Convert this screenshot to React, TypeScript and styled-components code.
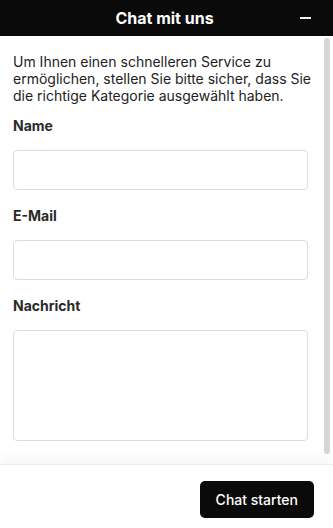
import React, { FC } from "react";
import styled, { createGlobalStyle } from "styled-components";

const GlobalStyle = createGlobalStyle`
  body {
    margin: 0;
    background: #ffffff;
    font-family: Inter, "Noto Sans", "Liberation Sans", sans-serif;
  }
  * {
    box-sizing: border-box;
  }
`;

const fields = [
  { label: "Name", name: "name", multiline: false },
  { label: "E-Mail", name: "email", multiline: false },
  { label: "Nachricht", name: "message", multiline: true },
];

const App: FC = () => {
  return (
    <StyledWidget>
      <GlobalStyle />
      <StyledHeader>
        <span />
        <StyledTitle>Chat mit uns</StyledTitle>
        <StyledMinimize aria-label="Minimieren">
          <StyledBar />
        </StyledMinimize>
      </StyledHeader>

      <StyledScrollArea>
        <StyledBody>
          <StyledIntro>
            Um Ihnen einen schnelleren Service zu ermöglichen, stellen Sie
            bitte sicher, dass Sie die richtige Kategorie ausgewählt haben.
          </StyledIntro>

          {fields.map((field) => (
            <StyledField key={field.name}>
              <StyledLabel htmlFor={field.name}>{field.label}</StyledLabel>
              {field.multiline ? (
                <StyledTextArea id={field.name} name={field.name} />
              ) : (
                <StyledInput id={field.name} name={field.name} type="text" />
              )}
            </StyledField>
          ))}
        </StyledBody>
        <StyledScrollbar>
          <StyledThumb />
        </StyledScrollbar>
      </StyledScrollArea>

      <StyledFooter>
        <StyledButton type="button">Chat starten</StyledButton>
      </StyledFooter>
    </StyledWidget>
  );
};

const StyledWidget = styled.div`
  width: 333px;
  height: 528px;
  display: flex;
  flex-direction: column;
  background: #ffffff;
  overflow: hidden;
`;

const StyledHeader = styled.header`
  height: 36px;
  flex-shrink: 0;
  display: grid;
  grid-template-columns: 1fr auto 1fr;
  align-items: center;
  background: #0a0a0a;
  color: #ffffff;
`;

const StyledTitle = styled.h1`
  margin: 0 4px 0 0;
  font-size: 16px;
  font-weight: 700;
  line-height: 20px;
`;

const StyledMinimize = styled.button`
  justify-self: end;
  width: 28px;
  height: 28px;
  margin-right: 14px;
  padding: 0;
  border: none;
  background: transparent;
  display: flex;
  align-items: center;
  justify-content: center;
  cursor: pointer;
`;

const StyledBar = styled.span`
  width: 11px;
  height: 2px;
  background: #f2f2f2;
`;

const StyledScrollArea = styled.div`
  flex: 1;
  min-height: 0;
  display: flex;
`;

const StyledBody = styled.div`
  flex: 1;
  overflow: hidden;
  padding: 17px 16px 0 13px;
  display: flex;
  flex-direction: column;
  gap: 16px;
`;

const StyledScrollbar = styled.div`
  width: 9px;
  flex-shrink: 0;
  display: flex;
  padding: 2px 3px 10px 0;
`;

const StyledThumb = styled.div`
  flex: 1;
  background: #d6d6d6;
  border-radius: 3px;
`;

const StyledIntro = styled.p`
  margin: 0 -12px -4px 0;
  font-size: 14px;
  line-height: 17px;
  color: #222222;
`;

const StyledField = styled.div`
  display: flex;
  flex-direction: column;
  gap: 14px;
  flex-shrink: 0;
`;

const StyledLabel = styled.label`
  font-size: 14px;
  font-weight: 700;
  line-height: 20px;
  color: #2a2a2a;
`;

const StyledInput = styled.input`
  height: 40px;
  width: 100%;
  border: 1px solid #dcdcdc;
  border-radius: 4px;
  padding: 0 10px;
  font: inherit;
  font-size: 14px;
  outline: none;
`;

const StyledTextArea = styled.textarea`
  height: 111px;
  width: 100%;
  border: 1px solid #dcdcdc;
  border-radius: 4px;
  padding: 10px;
  font: inherit;
  font-size: 14px;
  resize: none;
  outline: none;
`;

const StyledFooter = styled.footer`
  height: 64px;
  flex-shrink: 0;
  display: flex;
  justify-content: flex-end;
  align-items: flex-start;
  padding: 16px 19px 0 0;
  border-top: 1px solid #ececec;
  box-shadow: 0 -8px 12px rgba(0, 0, 0, 0.03);
  position: relative;
  background: #ffffff;
`;

const StyledButton = styled.button`
  height: 37px;
  padding: 0 16px;
  border: none;
  border-radius: 5px;
  background: #0a0a0a;
  color: #ffffff;
  font-family: inherit;
  font-size: 14px;
  font-weight: 500;
  cursor: pointer;
`;

export default App;
